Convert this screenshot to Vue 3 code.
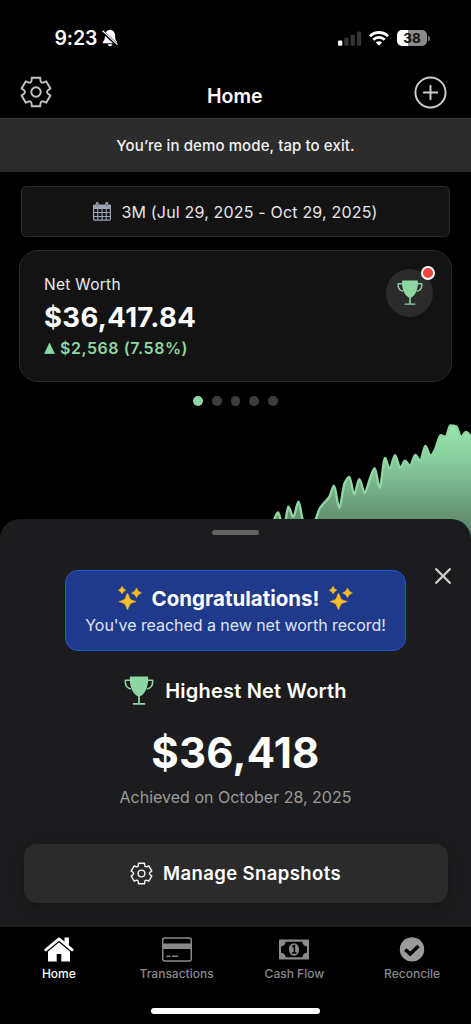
<script setup>
import { h } from 'vue'

const points = [
  [264, 534], [269, 532], [274, 520], [278, 512.5], [281.6, 521], [285, 521], [288.3, 506.8], [293.3, 517], [298.5, 501.8],
  [303, 521], [309, 532], [315, 521], [320, 508], [324.5, 502.5], [329.3, 497], [334, 485.7], [339.3, 508], [344.5, 483.5],
  [349.3, 477], [354.3, 494.3], [359.3, 479.3], [364.7, 492.7], [369.7, 479.5], [374.7, 468.3], [379.7, 487.7],
  [385, 458], [389.7, 469], [395, 455.3], [400.3, 468], [405, 460.7], [410, 465.7], [415.3, 455], [420.3, 460.7],
  [425.3, 446], [430.7, 455.7], [435, 449.5], [440.7, 435.3], [445.7, 436.7], [450.3, 425.5], [456.3, 426.3],
  [461, 437], [466, 432], [471, 436], [476, 442]
].map(([x, y]) => [x, y - 410])

// Smooth line whose turning points stay on the data (monotone in x).
function smooth(p) {
  const slope = (i) => (p[i + 1][1] - p[i][1]) / (p[i + 1][0] - p[i][0])
  const m = p.map((_, i) => {
    if (i === 0) return slope(0)
    if (i === p.length - 1) return slope(i - 1)
    const a = slope(i - 1)
    const b = slope(i)
    return a * b <= 0 ? 0 : (2 * a * b) / (a + b)
  })
  let d = `M${p[0][0]} ${p[0][1]}`
  for (let i = 0; i < p.length - 1; i++) {
    const dx = (p[i + 1][0] - p[i][0]) / 3
    d += `C${p[i][0] + dx} ${p[i][1] + dx * m[i]} ${p[i + 1][0] - dx} ${p[i + 1][1] - dx * m[i + 1]} ${p[i + 1][0]} ${p[i + 1][1]}`
  }
  return d
}
const line = smooth(points)
const area = `${line}V150H264Z`

// Six-tooth gear outline around the origin.
function gearPath() {
  const at = (deg, r) => {
    const t = (deg * Math.PI) / 180
    return `${(r * Math.sin(t)).toFixed(2)} ${(-r * Math.cos(t)).toFixed(2)}`
  }
  let d = ''
  for (let k = 0; k < 6; k++) {
    const c = k * 60
    d += `${k ? 'L' : 'M'}${at(c - 16.5, 14.8)}L${at(c + 16.5, 14.8)}L${at(c + 21, 12.4)}Q${at(c + 23.5, 11.2)} ${at(c + 30, 11)}Q${at(c + 36.5, 11.2)} ${at(c + 39, 12.4)}`
  }
  return d + 'Z'
}
const gear = gearPath()

const Trophy = () =>
  h('svg', { viewBox: '0 0 30 30' }, [
    h('path', { d: 'M7 .6h16c.8 0 1.200.5 1.200 1.300 0 3-.2 6.500-1.400 9.800-1.200 3.800-3.600 7.200-6.900 8.700v6.600h4.600a.85.85 0 0 1 0 1.700h-11a.85.85 0 0 1 0-1.700h4.600v-6.600c-3.300-1.500-5.700-4.900-6.900-8.700C6 8.400 5.800 4.900 5.800 1.900 5.800 1.100 6.200.6 7 .6z', fill: '#8ed6a2' }),
    h('path', { d: 'M6 4.300H1.400C1 8.400 2.800 12.100 7.200 13M24 4.300h4.600c.4 4.100-1.400 7.800-5.800 8.700', fill: 'none', stroke: '#8ed6a2', 'stroke-width': 1.600, 'stroke-linejoin': 'round' })
  ])

const Sparkles = () =>
  h('svg', { viewBox: '0 0 24 24' }, [
    h('path', {
      fill: '#fbbf24',
      d: 'M9.500 7.200Q10.600 8.500 11.600 12.300Q12.400 14 18.200 15.600Q12.800 17.200 11.800 18.600Q10.600 21.500 9.500 23.800Q8.400 21.500 7.200 18.600Q6.200 17.200.8 15.600Q6.600 14 7.400 12.300Q8.400 8.500 9.500 7.200ZM18.500 1.900Q19.700 5.800 23.500 6.900Q19.700 8 18.500 11.700Q17.300 8 13.500 6.900Q17.300 5.800 18.500 1.900ZM4.100.3Q5 3.300 7.900 4.200Q5 5.100 4.100 8Q3.200 5.100.3 4.200Q3.200 3.300 4.100.3Z',
      stroke: '#fbbf24', 'stroke-width': .5, 'stroke-linejoin': 'round'
    })
  ])
</script>

<template>
  <div class="phone">
    <div class="status">
      <span class="clock">9:23</span>
      <svg class="bell" viewBox="0 0 16 18">
        <path d="M8 .8a5.200 5.200 0 0 1 5.100 5.300c0 4.600.6 5.200 2 6.900v1.200H.9V13c1.400-1.700 2-2.300 2-6.900A5.200 5.200 0 0 1 8 .8ZM5.800 15.300h4.400a2.200 2 0 0 1-4.400 0Z" fill="#fff" />
        <path d="M0 2.200 15.200 16" stroke="#000" stroke-width="3" />
        <path d="M.6 1.800 15.500 15.600" stroke="#fff" stroke-width="1.200" />
      </svg>
      <span class="grow"></span>
      <svg class="signal" viewBox="0 0 24 15">
        <rect x="0" y="9.500" width="4.300" height="5.300" rx="1.100" fill="#fff" />
        <rect x="6.300" y="6.800" width="4.300" height="8" rx="1.100" fill="#333" />
        <rect x="12.600" y="3.700" width="4.300" height="11.100" rx="1.100" fill="#333" />
        <rect x="18.900" y=".4" width="4.300" height="14.400" rx="1.100" fill="#333" />
      </svg>
      <svg class="wifi" viewBox="0 0 20 15">
        <g fill="none" stroke="#fff" stroke-width="2.800">
          <path d="M1 5.200a12.800 12.800 0 0 1 18 0" />
          <path d="M4.300 8.700a8.200 8.200 0 0 1 11.400 0" />
        </g>
        <path d="M6.800 11.500a4.600 4.600 0 0 1 6.400 0L10 14.800Z" fill="#fff" />
      </svg>
      <div class="battery"><span>38</span></div>
      <i class="cap"></i>
    </div>

    <header class="head">
      <svg class="gear" viewBox="-16 -16 32 32">
        <g fill="none" stroke="#c4c4c4" stroke-width="1.900" stroke-linejoin="round">
          <path :d="gear" /><circle r="4.700" />
        </g>
      </svg>
      <h1>Home</h1>
      <svg class="plus" viewBox="-16 -16 32 32">
        <g fill="none" stroke="#cdcdcd" stroke-width="1.900" stroke-linecap="round">
          <circle r="14.600" /><path d="M-6.500 0H6.500M0-6.500V6.500" />
        </g>
      </svg>
    </header>

    <div class="demo"><span>You’re in demo mode, tap to exit.</span></div>

    <div class="range">
      <svg viewBox="0 0 18 19">
        <path fill="#9ca3b4" fill-rule="evenodd" d="M1.500 2.500h1.300V1.400a1.300 1.300 0 0 1 2.900 0v1.100h6.600V1.400a1.300 1.300 0 0 1 2.900 0v1.100h1.300A1.400 1.400 0 0 1 18 4v13.300a1.400 1.400 0 0 1-1.500 1.400h-15A1.400 1.400 0 0 1 0 17.300V4a1.400 1.400 0 0 1 1.500-1.500ZM1.200 7h3v2.900h-3ZM5.300 7h3.200v2.900H5.300ZM9.600 7h3.100v2.900H9.600ZM13.800 7h3v2.900h-3ZM1.200 11h3v2.900h-3ZM5.300 11h3.200v2.900H5.300ZM9.600 11h3.100v2.900H9.600ZM13.800 11h3v2.900h-3ZM1.200 15h3v2.500h-3ZM5.300 15h3.200v2.500H5.300ZM9.600 15h3.100v2.500H9.600ZM13.800 15h3v2.500h-3Z" />
        <path d="M4.250 1.300v3M13.750 1.300v3" stroke="#4b505c" stroke-width=".8" />
      </svg>
      <span>3M (Jul 29, 2025 - Oct 29, 2025)</span>
    </div>

    <section class="card">
      <div class="figures">
        <span class="label">Net Worth</span>
        <span class="amount">$36,417.84</span>
        <span class="delta">
          <svg viewBox="0 0 11 11"><path d="M5.500.1 10.500 10.800H.5Z" fill="#8ed6a2" stroke="#8ed6a2" stroke-width=".6" /></svg>
          <b>$2,568 (7.58%)</b>
        </span>
      </div>
      <div class="award"><Trophy /><i></i></div>
    </section>

    <div class="dots"><i class="on"></i><i></i><i></i><i></i><i></i></div>

    <svg class="chart" viewBox="0 0 471 140">
      <defs>
        <linearGradient id="fade" gradientUnits="userSpaceOnUse" x1="0" y1="15" x2="0" y2="140">
          <stop offset="0" stop-color="#97e7b0" />
          <stop offset=".3" stop-color="#86cb9b" />
          <stop offset=".72" stop-color="#659373" />
          <stop offset="1" stop-color="#4f7a5d" />
        </linearGradient>
      </defs>
      <path :d="area" fill="url(#fade)" />
      <path :d="line" fill="none" stroke="#8ed6a2" stroke-width="2.400" />
    </svg>

    <section class="sheet">
      <i class="grab"></i>
      <svg class="close" viewBox="0 0 16 16"><path d="M1.200 1.200 14.800 14.800M14.800 1.200 1.200 14.800" stroke="#cfcfcf" stroke-width="2.300" stroke-linecap="round" /></svg>
      <div class="congrats">
        <div class="cheer"><Sparkles /><strong>Congratulations!</strong><Sparkles /></div>
        <span>You've reached a new net worth record!</span>
      </div>
      <div class="title"><Trophy /><h2>Highest Net Worth</h2></div>
      <div class="record">$36,418</div>
      <div class="when">Achieved on October 28, 2025</div>
      <button class="manage">
        <svg viewBox="-16 -16 32 32">
          <g fill="none" stroke="#f2f2f2" stroke-width="2" stroke-linejoin="round">
            <path :d="gear" /><circle r="4.700" />
          </g>
        </svg>
        <span>Manage Snapshots</span>
      </button>
    </section>

    <nav class="tabs">
      <a class="active">
        <svg viewBox="0 0 30 25" fill="#fff">
          <path d="M15 4.700 26 14.300V24.500H17.300V17H12.700V24.500H4V14.300Z" />
          <path d="M1.700 13.200 15 2 28.300 13.200" fill="none" stroke="#000" stroke-width="5" />
          <path d="M1.800 12.800 15 1.900 28.200 12.800" fill="none" stroke="#fff" stroke-width="2.800" stroke-linecap="round" stroke-linejoin="round" />
          <path d="M20.500.6H24.900V9.500L20.500 6Z" />
        </svg>
        <span>Home</span>
      </a>
      <a>
        <svg viewBox="0 0 30 25">
          <rect x=".7" y=".9" width="28.600" height="23" rx="1.800" fill="none" stroke="#8a8a8a" stroke-width="1.500" />
          <path d="M1 6.500H29V12H1Z" fill="#8a8a8a" />
          <path d="M4.500 19.300H8.500M10.300 19.300H15.800" stroke="#8a8a8a" stroke-width="1.600" />
        </svg>
        <span>Transactions</span>
      </a>
      <a>
        <svg viewBox="0 0 30 25">
          <path fill="#8a8a8a" fill-rule="evenodd" d="M.8 2.500H29.200A.8.800 0 0 1 30 3.300V21.700A.8.800 0 0 1 29.200 22.500H.8A.8.800 0 0 1 0 21.700V3.300A.8.800 0 0 1 .8 2.500ZM6.600 4.800A4.700 4.700 0 0 1 2 9.500V15.700A4.700 4.700 0 0 1 6.600 20.300H23.400A4.700 4.700 0 0 1 28 15.700V9.500A4.700 4.700 0 0 1 23.400 4.800Z" />
          <ellipse cx="15" cy="12.500" rx="5.100" ry="6.300" fill="#8a8a8a" />
          <path d="M13.100 9.700 15.400 8.700V15.800M12.900 16.100H17.500" fill="none" stroke="#000" stroke-width="1.500" />
        </svg>
        <span>Cash Flow</span>
      </a>
      <a>
        <svg viewBox="0 0 30 25">
          <circle cx="15" cy="12.400" r="12.200" fill="#9a9a9a" />
          <path d="m8.300 12.400 4.900 4.700 8.300-8.100" fill="none" stroke="#000" stroke-width="3.500" />
        </svg>
        <span>Reconcile</span>
      </a>
    </nav>
    <div class="home-bar"><i></i></div>
  </div>
</template>

<style>
body { background: #000; }
</style>

<style scoped>
.phone { width: 471px; height: 1024px; overflow: hidden; background: #000; color: #fff; font-family: Inter, "Liberation Sans", sans-serif; display: flex; flex-direction: column; }
.phone * { box-sizing: border-box; }
.phone > * { flex-shrink: 0; }
span, strong, b { white-space: nowrap; }
svg { display: block; flex-shrink: 0; }
.status { height: 76px; padding: 0 41px 0 54.500px; display: flex; align-items: center; }
.clock { font-size: 19.500px; font-weight: 600; letter-spacing: -.1px; }
.bell { width: 16px; height: 18px; margin-left: 5px; }
.grow { flex: 1; }
.signal { width: 24px; height: 15px; }
.wifi { width: 20px; height: 15px; margin-left: 7.500px; }
.battery { width: 30px; height: 16px; margin-left: 8px; border-radius: 5px; background: linear-gradient(90deg, #fff 38%, #8b8b8b 38%); color: #111; font-size: 13.500px; font-weight: 700; display: flex; align-items: center; justify-content: center; }
.cap { width: 2px; height: 5px; margin-left: 1px; border-radius: 0 2px 2px 0; background: #777; }
.head { height: 42px; padding: 0 24px 0 19.500px; display: flex; justify-content: space-between; align-items: flex-start; }
.gear { width: 32px; height: 32px; }
.plus { width: 33px; height: 33px; }
h1 { margin: 7.500px 0 0; padding-left: 4px; font-size: 19.500px; line-height: 24px; font-weight: 600; }
.demo { height: 54px; border-top: 1px solid #3a3838; background: #2c2c2c; display: flex; align-items: center; justify-content: center; font-size: 15px; font-weight: 500; letter-spacing: .1px; color: #f2f2f2; }
.range { width: 429px; height: 51px; margin: 14px auto 0; border: 1px solid #2b2b2b; border-radius: 5px; background: #131313; display: flex; align-items: center; justify-content: center; gap: 10px; font-size: 16px; letter-spacing: .18px; color: #e6e6e6; }
.range svg { width: 18px; height: 19px; }
.card { width: 433px; height: 132px; margin: 13px 0 0 19px; border: 1px solid #2b2b2b; border-radius: 19px; background: #131313; display: flex; justify-content: space-between; padding: 18px 18px 0 24px; }
.figures { display: flex; flex-direction: column; align-items: flex-start; }
.label { font-size: 15.500px; line-height: 32px; letter-spacing: .3px; color: #ebebeb; }
.amount { font-size: 27.500px; line-height: 32px; font-weight: 700; letter-spacing: .33px; }
.delta { display: flex; align-items: center; gap: 5px; font-size: 16px; line-height: 30px; letter-spacing: .55px; color: #8ed6a2; }
.delta svg { width: 11px; height: 11px; }
.delta b { font-weight: 600; }
.award { position: relative; width: 47px; height: 48px; border-radius: 50%; background: #2b2b2b; display: flex; justify-content: center; padding-top: 11px; }
.award svg { width: 26px; height: 26px; }
.award i { position: absolute; right: -2px; top: -3px; width: 14px; height: 14px; border-radius: 50%; border: 2px solid #fff; background: #ef4444; }
.dots { height: 28px; display: flex; justify-content: center; gap: 9px; padding-top: 14px; }
.dots i { width: 9.800px; height: 9.800px; border-radius: 50%; background: #3c3c3c; }
.dots .on { background: #8ed6a2; }
.chart { width: 471px; height: 140px; }
.sheet { position: relative; height: 408px; margin-top: -31.500px; border-radius: 20px 20px 0 0; background: #1c1c1e; display: flex; flex-direction: column; align-items: center; }
.grab { width: 47px; height: 5px; margin-top: 11.500px; border-radius: 3px; background: #626262; }
.close { position: absolute; left: 435px; top: 49px; width: 16px; height: 16px; }
.congrats { width: 341px; height: 81px; margin-top: 35px; border: 1.500px solid #2558d4; border-radius: 13px; background: #1f3a8a; display: flex; flex-direction: column; align-items: center; padding-top: 13px; }
.cheer { display: flex; align-items: center; gap: 10px; height: 28px; }
.cheer svg { width: 24px; height: 24px; }
.cheer strong { font-size: 20.500px; font-weight: 700; }
.congrats > span { font-size: 16px; line-height: 26px; letter-spacing: -.05px; color: #dfe4f2; }
.title { display: flex; align-items: center; gap: 11px; margin-top: 24px; height: 31px; }
.title svg { width: 30px; height: 30px; }
h2 { margin: 0; font-size: 20px; line-height: 30px; font-weight: 600; letter-spacing: .2px; white-space: nowrap; }
.record { margin-top: 21.500px; font-size: 42px; line-height: 50px; font-weight: 700; letter-spacing: .2px; }
.when { margin-top: 8px; font-size: 16px; line-height: 22px; color: #9b9b9d; white-space: nowrap; }
.manage { width: 424px; height: 59px; margin-top: 36px; padding: 0; border: 0; border-radius: 13px; background: #2b2b2b; box-shadow: 0 4px 12px rgba(0, 0, 0, .2); color: #fff; font-family: inherit; font-size: 18.500px; font-weight: 600; letter-spacing: .4px; display: flex; align-items: center; justify-content: center; gap: 10px; }
.manage svg { width: 23px; height: 23px; }
.tabs { height: 60px; display: grid; grid-template-columns: repeat(4, 1fr); padding-top: 10px; }
.tabs a { display: flex; flex-direction: column; align-items: center; font-size: 12px; line-height: 15px; font-weight: 500; color: #8a8a8a; }
.tabs svg { width: 30px; height: 25px; margin-bottom: 4px; }
.tabs .active { color: #fff; }
.home-bar { height: 38px; display: flex; justify-content: center; padding-top: 21.500px; }
.home-bar i { width: 169px; height: 6px; border-radius: 3px; background: #fff; }
</style>
